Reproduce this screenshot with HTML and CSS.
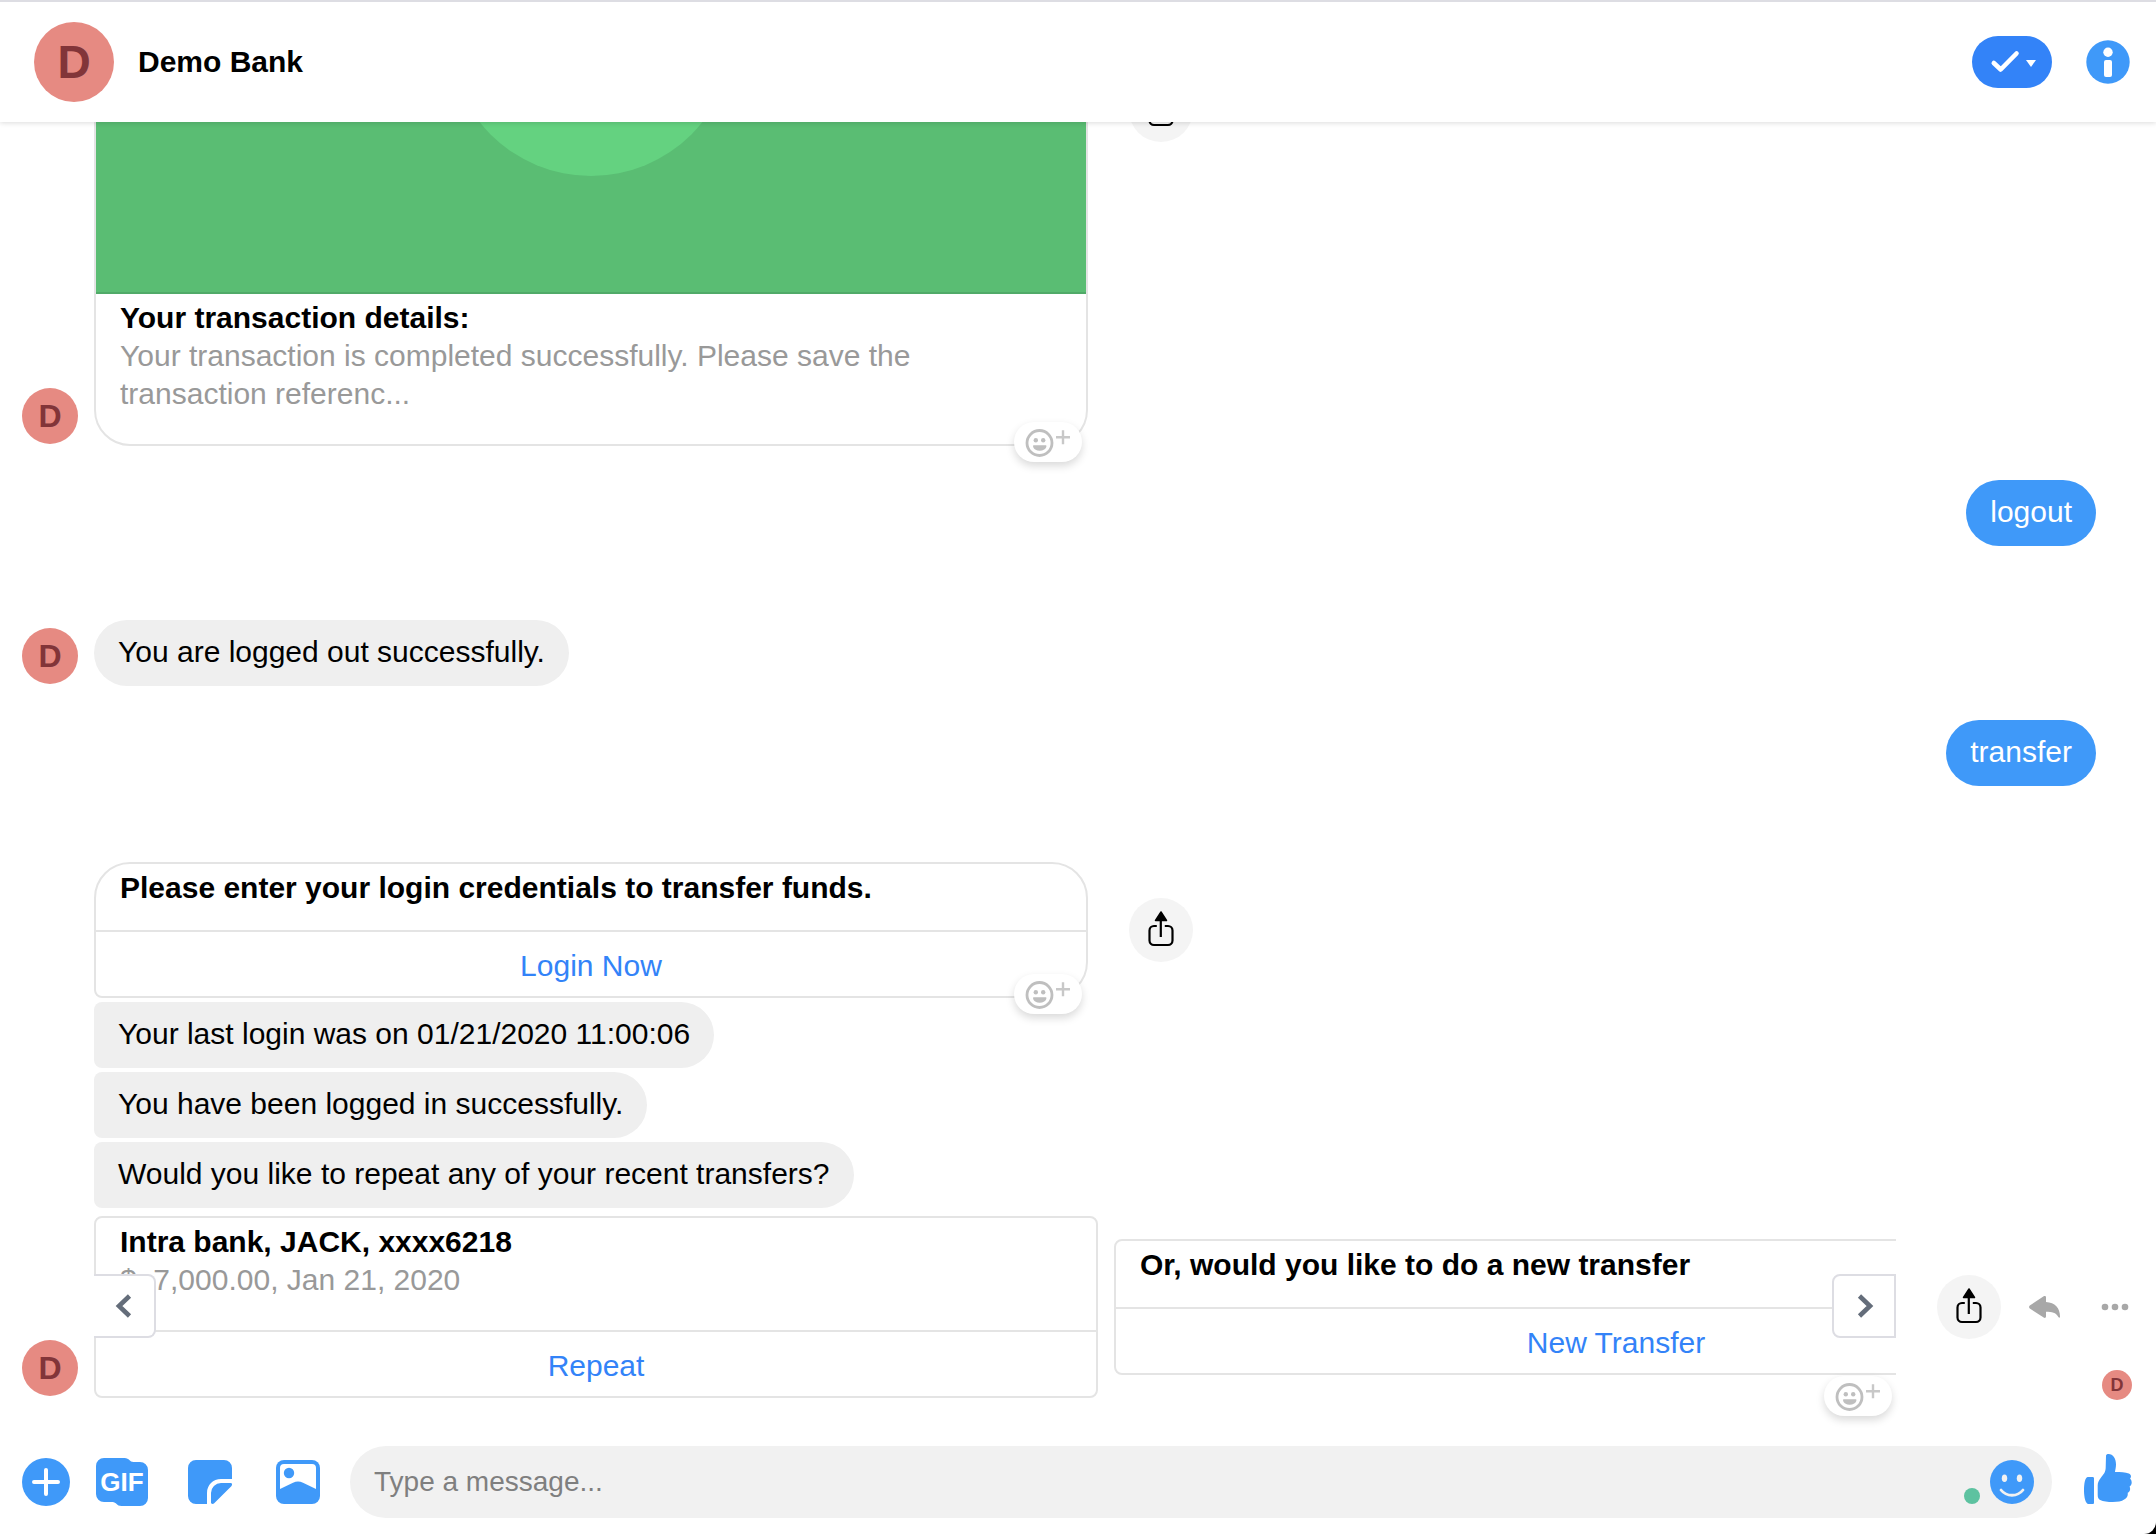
FILE: index.html
```html
<!DOCTYPE html>
<html lang="en">
<head>
<meta charset="utf-8">
<meta name="viewport" content="width=device-width, initial-scale=1">
<title>Demo Bank</title>
<link rel="stylesheet" href="styles.css">
</head>
<body>
<svg class="sprite" aria-hidden="true">
  <symbol id="share" viewBox="0 0 64 64">
    <path d="M32 14 37.500 22.500h-11z" stroke="#000" stroke-width="1.500" stroke-linejoin="round"/>
    <path d="M32 22v17M28 28h-2.800a4.500 4.500 0 0 0-4.500 4.500v10a4.500 4.500 0 0 0 4.500 4.500h14a4.500 4.500 0 0 0 4.500-4.500v-10a4.500 4.500 0 0 0-4.500-4.500H36" transform="translate(-.2)" fill="none" stroke="#000" stroke-width="2.200"/>
  </symbol>
  <symbol id="react" viewBox="0 0 68 40">
    <circle cx="25.500" cy="21" r="12.500" fill="none" stroke="#bfbfbf" stroke-width="2.800"/>
    <circle cx="21.800" cy="18.300" r="2.200" fill="#bfbfbf"/>
    <circle cx="29.200" cy="18.300" r="2.200" fill="#bfbfbf"/>
    <path d="M19.500 23.300h12.500c1 0 .6 5.400-6.300 5.400s-7.200-5.400-6.200-5.400z" fill="#bfbfbf"/>
    <path d="M42 15.300h14M49 8.300v14" stroke="#c8c8c8" stroke-width="2.400"/>
  </symbol>
</svg>
<div class="app">
  <header class="header">
    <span class="avatar avatar-large">D</span>
    <h1 class="title">Demo Bank</h1>
    <button class="done" type="button" aria-label="Mark as done">
      <svg width="80" height="52" viewBox="0 0 80 52"><path d="M21.800 27 28.700 33.500 44.500 17.500" fill="none" stroke="#fff" stroke-width="4.600" stroke-linecap="round" stroke-linejoin="round"/><path d="M54 24h10l-5 7z" fill="#fff"/></svg>
    </button>
    <button class="plain" type="button" aria-label="Conversation information">
      <svg width="44" height="44" viewBox="0 0 44 44"><circle cx="22" cy="22" r="21.700" fill="#3f99f9"/><circle cx="22" cy="12.300" r="4.700" fill="#fff"/><rect x="18" y="20" width="8" height="17" rx="2" fill="#fff"/></svg>
    </button>
  </header>

  <main class="messages">
    <div class="row">
      <span class="avatar avatar-small">D</span>
      <div class="card-wrap">
        <article class="card">
          <div class="picture"><div class="disc"></div></div>
          <div class="card-body">
            <h2 class="card-title">Your transaction details:</h2>
            <p class="card-text">Your transaction is completed successfully. Please save the transaction referenc...</p>
          </div>
        </article>
        <button class="react" type="button" aria-label="Add reaction"><svg width="68" height="40"><use href="#react"/></svg></button>
      </div>
      <button class="share" type="button" aria-label="Share"><svg width="64" height="64"><use href="#share"/></svg></button>
    </div>

    <div class="row row-own"><p class="bubble bubble-own">logout</p></div>

    <div class="row row-reply">
      <span class="avatar avatar-small">D</span>
      <p class="bubble">You are logged out successfully.</p>
    </div>

    <div class="row row-own"><p class="bubble bubble-own">transfer</p></div>

    <div class="row row-reply row-login">
      <span class="avatar-space"></span>
      <div class="card-wrap">
        <article class="card card-first">
          <div class="card-body"><h2 class="card-title">Please enter your login credentials to transfer funds.</h2></div>
          <button class="card-button" type="button">Login Now</button>
        </article>
        <button class="react" type="button" aria-label="Add reaction"><svg width="68" height="40"><use href="#react"/></svg></button>
      </div>
      <button class="share" type="button" aria-label="Share"><svg width="64" height="64"><use href="#share"/></svg></button>
    </div>
    <div class="row row-next"><span class="avatar-space"></span><p class="bubble bubble-middle">Your last login was on 01/21/2020 11:00:06</p></div>
    <div class="row row-next"><span class="avatar-space"></span><p class="bubble bubble-middle">You have been logged in successfully.</p></div>
    <div class="row row-next"><span class="avatar-space"></span><p class="bubble bubble-middle">Would you like to repeat any of your recent transfers?</p></div>

    <div class="row row-carousel">
      <span class="avatar avatar-small">D</span>
      <div class="carousel">
        <div class="track">
          <article class="card card-slide">
            <div class="card-body">
              <h2 class="card-title">Intra bank, JACK, xxxx6218</h2>
              <p class="card-text">$&nbsp; 7,000.00, Jan 21, 2020</p>
            </div>
            <button class="card-button" type="button">Repeat</button>
          </article>
          <article class="card card-slide">
            <div class="card-body"><h2 class="card-title">Or, would you like to do a new transfer</h2></div>
            <button class="card-button" type="button">New Transfer</button>
          </article>
        </div>
        <button class="nav nav-prev" type="button" aria-label="Previous"><svg width="60" height="60" viewBox="0 2 60 60"><path d="M35.500 22 25 32l10.500 10" fill="none" stroke="#646d7a" stroke-width="4.600"/></svg></button>
        <button class="nav nav-next" type="button" aria-label="Next"><svg width="60" height="60" viewBox="2 2 60 60"><path d="M27.500 22 38 32 27.500 42" fill="none" stroke="#646d7a" stroke-width="4.600"/></svg></button>
        <button class="react react-carousel" type="button" aria-label="Add reaction"><svg width="68" height="40"><use href="#react"/></svg></button>
      </div>
      <div class="actions">
        <button class="share" type="button" aria-label="Share"><svg width="64" height="64"><use href="#share"/></svg></button>
        <button class="plain" type="button" aria-label="Reply"><svg width="32" height="22" viewBox="0 0 32 22"><path d="M17 1.200V6C26 6.500 31 12 31 20.500c0 1.500-1 1.500-1.600.5-2.600-4.500-6.400-5.200-12.400-5.200v4.800c0 1.400-1.300 1.700-2.300 1L.8 12.500c-1-.8-1-2.200 0-3L14.700.3C15.700-.3 17 0 17 1.200z" fill="#a8a8a8"/></svg></button>
        <button class="plain more" type="button" aria-label="More"><svg width="28" height="8" viewBox="0 0 28 8"><g fill="#a8a8a8"><circle cx="4" cy="4" r="3.300"/><circle cx="14" cy="4" r="3.300"/><circle cx="24" cy="4" r="3.300"/></g></svg></button>
      </div>
    </div>
    <span class="avatar avatar-seen">D</span>
  </main>

  <form class="composer">
    <button class="plain" type="button" aria-label="More options"><svg width="48" height="48" viewBox="0 0 48 48"><circle cx="24" cy="24" r="24" fill="#3f99f9"/><path d="M12 24h24M24 12v24" stroke="#fff" stroke-width="4" stroke-linecap="round"/></svg></button>
    <button class="plain gif" type="button"><svg width="52" height="48" viewBox="0 0 52 48"><path d="M8 0h20.500c5 0 5 4 9 4H44a8 8 0 0 1 8 8v28a8 8 0 0 1-8 8H25.500c-5 0-5-4-9-4H8a8 8 0 0 1-8-8V8a8 8 0 0 1 8-8z" fill="#3f99f9"/><text x="26" y="33" class="gif-text">GIF</text></svg></button>
    <button class="plain sticker" type="button" aria-label="Sticker"><svg width="44" height="44" viewBox="0 0 44 44"><path d="M8 0h28a8 8 0 0 1 8 8v11H33c-8 0-14 6-14 14v11H8a8 8 0 0 1-8-8V8a8 8 0 0 1 8-8zM42.500 23H33a10 10 0 0 0-10 10v9.500c0 1.600 2 1.900 3.200.8L43.300 26.200c1.100-1.200 1-3.200-.8-3.200z" fill="#3f99f9"/></svg></button>
    <button class="plain photo" type="button" aria-label="Photo"><svg width="44" height="44" viewBox="0 0 44 44"><rect width="44" height="44" rx="8" fill="#3f99f9"/><path d="M4 29V8a4 4 0 0 1 4-4h28a4 4 0 0 1 4 4v21l-13-6.300c-3.500-1.500-6.500-1.500-10 0z" fill="#fff"/><circle cx="13" cy="13" r="5.200" fill="#3f99f9"/></svg></button>
    <div class="field">
      <input class="input" type="text" aria-label="Type a message" placeholder="Type a message...">
      <span class="status"></span>
      <button class="plain" type="button" aria-label="Emoji"><svg width="44" height="44" viewBox="0 0 44 44"><circle cx="22" cy="22" r="22" fill="#3f99f9"/><ellipse cx="14.500" cy="18.300" rx="2.700" ry="3.800" fill="#f1f1f1"/><ellipse cx="29.500" cy="18.300" rx="2.700" ry="3.800" fill="#f1f1f1"/><path d="M11 30c5.500 7 16.500 7 22 0" fill="none" stroke="#f1f1f1" stroke-width="2.800" stroke-linecap="round"/></svg></button>
    </div>
    <button class="plain like" type="button" aria-label="Send a like"><svg width="48" height="50" viewBox="0 0 48 50"><path d="M4 23h4.500c1 0 1.500.5 1.500 1.500v24c0 1-.5 1.500-1.500 1.500H4.500C1.500 50 0 43 0 36.500S1 23 4 23zM22 2c0-1.400 1.200-2 2.500-2C29 0 32 4.600 32 10.500c0 3-.7 5.200-1 7.500 5.500 0 10.500.2 13.800 1.600 2.400 1 2.800 3.400 1.300 5 2.200 2.300 2.200 6.200-.5 8 1.200 2.500.3 5.200-1.900 6.200.5 3-.8 5.500-3.500 6.700-2.500 1.800-6.500 2.500-11.500 2.500-5 0-9.500-.5-12.500-2-1.800-1-2.500-2.500-2.500-5V31.500c0-3 1-5 2.800-7.300 3-3.700 5.200-6.200 5.200-10.700z" fill="#3f99f9"/></svg></button>
  </form>
</div>
</body>
</html>
```
FILE: styles.css
```css
* {
  box-sizing: border-box;
}

html {
  background: #000;
}

body {
  margin: 0;
  font: 30px/38px "Liberation Sans", Arial, sans-serif;
  color: #000;
}

h1,
h2,
p {
  margin: 0;
  font-size: inherit;
}

button {
  padding: 0;
  border: 0;
  font: inherit;
  cursor: pointer;
}

svg {
  display: block;
}

.sprite {
  position: absolute;
  width: 0;
  height: 0;
}

.app {
  display: flex;
  flex-direction: column;
  height: 100vh;
  overflow: hidden;
  background: #fff;
  border-bottom-right-radius: 12px;
}

.header {
  position: relative;
  z-index: 2;
  display: flex;
  flex: none;
  align-items: center;
  padding: 20px 26px 20px 34px;
  border-top: 2px solid #dddde3;
  background: #fff;
  box-shadow: 0 1px 5px rgba(0, 0, 0, 0.14);
}

.title {
  flex: 1;
  margin-left: 24px;
}

.done {
  margin-right: 34px;
  border-radius: 26px;
  background: #3383f8;
}

.plain {
  flex: none;
  background: none;
}

.avatar {
  display: flex;
  flex: none;
  align-items: center;
  justify-content: center;
  border-radius: 50%;
  background: #e68a82;
  color: #823539;
  font-weight: bold;
}

.avatar-large {
  width: 80px;
  height: 80px;
  font-size: 46px;
}

.avatar-small {
  align-self: flex-end;
  width: 56px;
  height: 56px;
  margin: 0 16px 2px 0;
  font-size: 32px;
}

.avatar-space {
  flex: none;
  width: 72px;
}

.avatar-seen {
  position: absolute;
  right: 24px;
  bottom: 30px;
  width: 30px;
  height: 30px;
  font-size: 18px;
}

.messages {
  position: relative;
  display: flex;
  flex: 1;
  flex-direction: column;
  justify-content: flex-end;
  min-height: 0;
  padding-bottom: 32px;
  overflow: hidden;
}

.row {
  display: flex;
  flex: none;
  align-items: center;
  padding-left: 22px;
}

.row-own {
  justify-content: flex-end;
  margin-top: 34px;
  padding-right: 60px;
}

.row-reply {
  margin-top: 74px;
}

.row-login {
  margin-top: 76px;
}

.row-next {
  margin-top: 4px;
}

.row-carousel {
  margin-top: 8px;
  padding-right: 27px;
}

.bubble {
  padding: 13px 24px 15px;
  border-radius: 33px;
  background: #efefef;
}

.bubble-middle {
  border-radius: 8px 33px 33px 8px;
}

.bubble-own {
  background: #3f99f9;
  color: #fff;
}

.card-wrap {
  position: relative;
  width: 994px;
  margin-right: 41px;
}

.card {
  overflow: hidden;
  border: 2px solid #e4e4e4;
  border-radius: 36px;
  background: #fff;
}

.card-first {
  border-bottom-left-radius: 8px;
}

.card-slide {
  flex: none;
  width: 1004px;
  border-radius: 8px;
}

.picture {
  display: flex;
  align-items: center;
  justify-content: center;
  height: 518px;
  border-bottom: 2px solid #50aa68;
  background: #5abd73;
}

.disc {
  width: 284px;
  height: 284px;
  border-radius: 50%;
  background: #64d280;
}

.card-body {
  padding: 5px 24px 23px;
}

.card-text {
  margin-bottom: 8px;
  color: #999;
}

.card-button {
  display: block;
  width: 100%;
  padding: 15px 24px 11px;
  border-top: 2px solid #e4e4e4;
  background: none;
  color: #3383f8;
}

.react {
  position: absolute;
  right: 6px;
  bottom: -16px;
  border-radius: 20px;
  background: #fff;
  box-shadow: 0 4px 8px rgba(0, 0, 0, 0.15);
}

.react-carousel {
  right: 4px;
  bottom: -18px;
}

.share {
  flex: none;
  border-radius: 50%;
  background: #f4f4f4;
}

.carousel {
  position: relative;
  flex: 1;
  min-width: 0;
}

.track {
  display: flex;
  gap: 16px;
  align-items: center;
  overflow: hidden;
}

.nav {
  position: absolute;
  top: 58px;
  border: 2px solid #dddde3;
  background: #fff;
}

.nav-prev {
  left: 0;
  border-left: 0;
  border-radius: 0 8px 8px 0;
}

.nav-next {
  right: 0;
  border-radius: 8px 0 0 8px;
}

.actions {
  display: flex;
  align-items: center;
  gap: 28px;
  margin-left: 41px;
}

.more {
  margin-left: 12px;
}

.composer {
  display: flex;
  flex: none;
  align-items: center;
  padding: 16px 24px 16px 22px;
}

.gif {
  margin-left: 26px;
}

.gif-text {
  fill: #fff;
  font-size: 26px;
  font-weight: bold;
  text-anchor: middle;
}

.sticker {
  margin-left: 40px;
}

.photo {
  margin-left: 44px;
}

.field {
  display: flex;
  flex: 1;
  align-items: center;
  min-width: 0;
  height: 72px;
  margin: 0 32px 0 30px;
  padding: 0 18px 0 24px;
  border-radius: 36px;
  background: #f1f1f1;
}

.input {
  flex: 1;
  min-width: 0;
  padding: 0;
  border: 0;
  outline: 0;
  background: none;
  font: inherit;
  font-size: 28px;
}

.input::placeholder {
  color: #7f7f7f;
}

.status {
  align-self: flex-end;
  width: 16px;
  height: 16px;
  margin: 0 10px 14px;
  border-radius: 50%;
  background: #5dc2a0;
}

.like {
  align-self: flex-start;
  margin-top: 8px;
}
```
